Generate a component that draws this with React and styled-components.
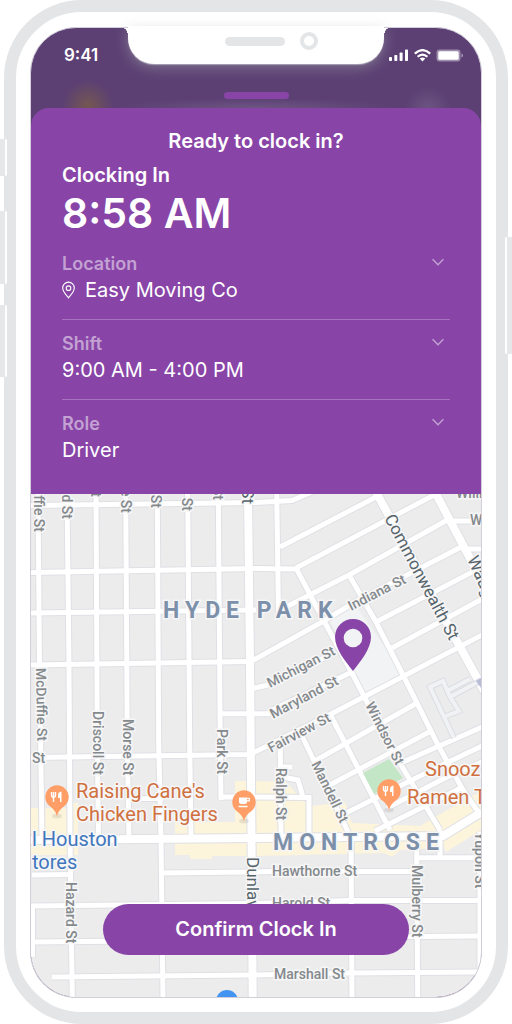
import React, { useState } from "react";
import styled, { createGlobalStyle } from "styled-components";

const colors = {
  purple: "#8845a7",
  backdrop: "#5c4074",
  frame: "#e4e5e7",
  faded: "#c3a2d3",
  divider: "#a673bf",
  white: "#ffffff",
  poi: "#d0703f",
  poiPin: "#ff9e67",
  street: "#84898c",
  avenue: "#56646b",
  district: "#7d90aa",
};

const GlobalStyle = createGlobalStyle`
  * {
    box-sizing: border-box;
  }
  body {
    margin: 0;
    background: ${colors.white};
    font-family: Inter, "Liberation Sans", sans-serif;
    color: ${colors.white};
  }
`;

const Stage = styled.div`
  padding: 0 4px;
  overflow: hidden;
`;

const Phone = styled.div`
  position: relative;
  border: 12px solid ${colors.frame};
  border-radius: 78px;
  padding: 15px 14px 14px;
  background: ${colors.white};
`;

const SideButton = styled.span`
  position: absolute;
  ${props => props.side}: -18px;
  top: ${props => props.top}px;
  width: 9px;
  height: ${props => props.length}px;
  background: #e6e7e8;
  border: 0 solid ${colors.white};
  border-${props => (props.side === "left" ? "right" : "left")}-width: 2px;
  border-radius: 2px;
`;

const Screen = styled.main`
  position: relative;
  border: 1px solid #d3cfd9;
  border-radius: 46px;
  background: ${colors.backdrop};
`;

const Header = styled.header`
  border-radius: 45px 45px 0 0;
  padding-bottom: 9px;
  background:
    radial-gradient(circle at 57px 78px, rgba(125, 96, 70, 0.75), transparent 26px),
    radial-gradient(ellipse 140px 10px at 50% 100%, rgba(160, 150, 175, 0.25), transparent),
    radial-gradient(circle at 397px 82px, rgba(160, 150, 175, 0.25), transparent 24px);
`;

const StatusBar = styled.div`
  display: grid;
  grid-template-columns: 1fr 256px 1fr;
  align-items: end;
  height: 37px;
`;

const Time = styled.span`
  padding-left: 33px;
  font-size: 17px;
  line-height: 20px;
  font-weight: 600;
`;

const Notch = styled.div`
  position: relative;
  align-self: start;
  display: flex;
  align-items: center;
  justify-content: center;
  gap: 15px;
  height: 38px;
  margin-top: -2px;
  padding: 0 0 8px 30px;
  border-radius: 0 0 26px 26px;
  background: ${colors.white};
  box-shadow: 0 1px 1px rgba(190, 190, 200, 0.7), 0 3px 14px rgba(180, 190, 180, 0.45);

  &::before,
  &::after {
    content: "";
    position: absolute;
    top: 2px;
    width: 5px;
    height: 8px;
  }
  &::before {
    left: -5px;
    background: radial-gradient(ellipse 5px 8px at 0 100%, transparent 95%, ${colors.white});
  }
  &::after {
    right: -5px;
    background: radial-gradient(ellipse 5px 8px at 100% 100%, transparent 95%, ${colors.white});
  }
`;

const Speaker = styled.span`
  width: 60px;
  height: 9px;
  border-radius: 5px;
  background: ${colors.frame};
`;

const Camera = styled.span`
  width: 18px;
  height: 18px;
  border: 4px solid ${colors.frame};
  border-radius: 50%;
`;

const StatusIcons = styled.div`
  display: flex;
  gap: 5px;
  padding: 0 0 3px 5px;
`;

const Handle = styled.div`
  width: 65px;
  height: 7px;
  margin: 27px auto 0;
  border-radius: 4px;
  background: ${colors.purple};
`;

const Sheet = styled.section`
  padding: 21px 31px 15px;
  border-radius: 18px 18px 0 0;
  background: ${colors.purple};
`;

const Title = styled.h1`
  margin: 0;
  font-size: 20px;
  line-height: 24px;
  font-weight: 600;
  text-align: center;
`;

const Subtitle = styled.h2`
  margin: 10px 0 0;
  font-size: 20px;
  line-height: 24px;
  font-weight: 600;
`;

const Clock = styled.div`
  margin: 2px 0 3px;
  font-size: 41px;
  line-height: 48px;
  font-weight: 600;
`;

const Field = styled.div`
  display: grid;
  grid-template-columns: 1fr auto;
  row-gap: 3px;
  padding: 13px 0 17px;
  border-bottom: 1px solid ${colors.divider};

  &:last-child {
    border-bottom: none;
  }
`;

const FieldLabel = styled.label`
  font-size: 18px;
  line-height: 22px;
  font-weight: 600;
  color: ${colors.faded};
`;

const FieldValue = styled.div`
  grid-column: 1 / -1;
  display: flex;
  align-items: center;
  gap: 10px;
`;

const FieldSelect = styled.select`
  appearance: none;
  flex: 1;
  min-width: 0;
  height: 24px;
  margin: 0;
  padding: 0;
  border: none;
  background: transparent;
  font-family: inherit;
  font-size: 20px;
  line-height: 24px;
  color: ${colors.white};
`;

const Chevron = styled.svg`
  width: 14px;
  height: 18px;
  margin-right: 5px;
  fill: none;
  stroke: ${colors.faded};
  stroke-width: 1.5;
`;

const MapArea = styled.section`
  position: relative;
  overflow: hidden;
  border-radius: 0 0 45px 45px;
`;

const MapDrawing = styled.svg`
  display: block;
  width: 100%;
  height: auto;
  background: #ececec;
  font-family: Roboto, "Liberation Sans", sans-serif;
`;

const StreetName = styled.text`
  font-size: ${props => (props.$major ? 17 : 14)}px;
  font-weight: ${props => (props.$major ? 400 : 500)};
  fill: ${props => (props.$major ? colors.avenue : colors.street)};
  stroke: #f6f6f7;
  stroke-width: 3px;
  paint-order: stroke;
`;

const DistrictName = styled(StreetName)`
  font-size: 23px;
  font-weight: 700;
  letter-spacing: 6px;
  fill: ${colors.district};
`;

const PlaceName = styled(StreetName)`
  font-size: 20px;
  font-weight: 400;
  fill: ${props => props.$color};
`;

const ConfirmButton = styled.button`
  position: absolute;
  left: 16%;
  right: 16%;
  bottom: 42px;
  padding: 13px 0 14px;
  border: none;
  border-radius: 26px;
  background: ${colors.purple};
  color: ${colors.white};
  font-family: inherit;
  font-size: 20px;
  line-height: 24px;
  font-weight: 600;
`;

const sideButtons = [
  { side: "left", top: 127, length: 37 },
  { side: "left", top: 199, length: 73 },
  { side: "left", top: 293, length: 72 },
  { side: "right", top: 225, length: 117 },
];

const fields = [
  { id: "location", label: "Location", value: "Easy Moving Co", icon: true },
  { id: "shift", label: "Shift", value: "9:00 AM - 4:00 PM" },
  { id: "role", label: "Role", value: "Driver" },
];

// thin residential streets
const streets = [
  // east - west
  "M31 505.5L256 502.5L292 500.5L312 492",
  "M31 572.5L256 568.5L296 569",
  "M31 613L256 610",
  "M31 665L250 661.5",
  "M222 713.7H270",
  "M250 689L268 685L330 655",
  "M31 757.5L250 754.5L331 714L402 677L482 635",
  "M141 798.5H163M220 797H250",
  "M32 875L72 874.5M162 873L250 872L272 871.5H416",
  "M31 906L250 903.5L350 900.5H481",
  "M31 942L250 940L350 937L481 936",
  "M52 977L250 975L350 973L481 972",
  "M416 857.7H482",
  "M252 797L309 797.5V838",
  // north - south
  "M38 494L39.5 665M39.5 665L42 838",
  "M67 494L69 665L70 838L72.3 998",
  "M96 494L97.3 745L98.5 838",
  "M125.7 494L127.3 745L129 838",
  "M157.3 494L158.7 745L161 838L163 998",
  "M187.7 494L189.7 745L191 838",
  "M218.3 494L220.3 745L221 800",
  "M32.5 906V957",
  "M276.7 494L278.5 612",
  "M280.3 748L281 838M281 767H292M282 777L298 780L303 797",
  "M351 838L352 998",
  "M416.7 850L417.7 998",
  "M440 830V857",
  "M480 832V972",
  // diagonals
  "M280 547L378 496",
  "M296 568L434 495",
  "M278 611L349 575L449 519",
  "M250 662L322 622L355 602L463 546",
  "M376 622L482 567",
  "M392 648L482 599",
  "M268 712L354 671",
  "M313 762L417 703",
  "M326 787L431 731",
  "M346 813L440 766L482 746",
  "M403 762L482 727",
  "M387 808L447 777L482 762",
  "M375 831L463 787",
  "M296 568L324 621L353 675L389 745L440 830",
  "M349 575L376 622L403 675L438 745L463 790L479 813",
  "M330 714L390 830",
  "M302 736L351 838",
  "M450 521H482M468 549H482",
];

const avenues = [
  "M248 494L250 665L251.5 838L252.7 998",
  "M31 840L256 838L443 836L482 812",
  "M376 492L459 645L488 698",
  "M435 492L484 585",
];

const campus = "M454 738L430 687L443 681L450 697L459 711L446 716M450 697L482 680M447 691L470 679";

// x, y is the start of the baseline, or its end for the names cut off at the top
const streetNames = [
  { text: "ffie St", x: 34, y: 532, angle: 90, end: true },
  { text: "d St", x: 62, y: 519, angle: 90, end: true },
  { text: "t", x: 91, y: 497, angle: 90, end: true },
  { text: "e St", x: 121, y: 513, angle: 90, end: true },
  { text: "St", x: 151, y: 508, angle: 90, end: true },
  { text: "St", x: 182, y: 511, angle: 90, end: true },
  { text: "St", x: 213, y: 500, angle: 90, end: true },
  { text: "St", x: 242, y: 504, angle: 90, end: true, major: true },
  { text: "McDuffie St", x: 36, y: 668, angle: 89 },
  { text: "Driscoll St", x: 93, y: 711, angle: 90 },
  { text: "Morse St", x: 123, y: 719, angle: 90 },
  { text: "Park St", x: 217, y: 729, angle: 90 },
  { text: "St", x: 32, y: 763, angle: 0 },
  { text: "Hazard St", x: 66, y: 882, angle: 90 },
  { text: "Dunlavy", x: 247, y: 857, angle: 90, major: true },
  { text: "Ralph St", x: 276, y: 768, angle: 90 },
  { text: "Mulberry St", x: 412, y: 865, angle: 90 },
  { text: "Yupon St", x: 475, y: 832, angle: 90 },
  { text: "Mandell St", x: 311, y: 764, angle: 64 },
  { text: "Windsor St", x: 365, y: 705, angle: 63 },
  { text: "Commonwealth St", x: 384, y: 518, angle: 62, major: true },
  { text: "Waugh", x: 467, y: 559, angle: 66, major: true },
  { text: "Indiana St", x: 351, y: 611, angle: -27 },
  { text: "Michigan St", x: 270, y: 688, angle: -27 },
  { text: "Maryland St", x: 273, y: 719, angle: -28 },
  { text: "Fairview St", x: 271, y: 753, angle: -28 },
  { text: "Hawthorne St", x: 272, y: 876, angle: 0 },
  { text: "Harold St", x: 272, y: 908, angle: 0 },
  { text: "Marshall St", x: 274, y: 979, angle: 0 },
  { text: "Willi", x: 456, y: 498, angle: 0 },
  { text: "W", x: 470, y: 525, angle: 0 },
];

const placeNames = [
  { text: "Raising Cane's", x: 76, y: 798, color: colors.poi },
  { text: "Chicken Fingers", x: 76, y: 821, color: colors.poi },
  { text: "Snooz", x: 425, y: 776, color: colors.poi },
  { text: "Ramen T", x: 407, y: 804, color: colors.poi },
  { text: "l Houston", x: 32, y: 846, color: "#3f76bd" },
  { text: "tores", x: 32, y: 869, color: "#3f76bd" },
];

const foodGlyph = (
  <>
    <path d="M-5.5 -5V-1.5Q-5.5 0 -3.5 0Q-1.5 0 -1.5 -1.5V-5M-3.5 -5V5" strokeWidth="1.4" fill="none" stroke="#fff" />
    <path d="M4.5 5H3V1H1V-2Q1 -5 4.5 -5.5Z" fill="#fff" />
  </>
);

const cafeGlyph = (
  <>
    <path d="M-5 -4.5H3V0Q3 2 1 2H-3Q-5 2 -5 0ZM-5.5 3.8H3.5V5.2H-5.5Z" fill="#fff" />
    <path d="M3 -3.7H5.3V-1.2H3" fill="none" stroke="#fff" strokeWidth="1.2" />
  </>
);

const PoiPin = ({ x, y, children }) => (
  <g transform={`translate(${x} ${y})`}>
    <ellipse cx="0" cy="19" rx="5" ry="2.5" fill="#000" opacity="0.08" />
    <path
      d="M0 20C-1 14 -4 12 -8 8.6A11.7 11.7 0 1 1 8 8.6C4 12 1 14 0 20Z"
      fill={colors.poiPin}
    />
    {children}
  </g>
);

const StreetMap = () => (
  <MapDrawing viewBox="31 494 450 503">
    <path
      d="M31 808H72V803H78V855H31ZM235 781H256V822H235ZM175 822H250V856H212V859H190V855H175ZM256 781L286 782L302 800L312 806L345 802L352 823L420 826L440 814L481 791V830L446 852L440 838L436 848L400 850L392 857L384 853L256 856Z"
      fill="#fcf4db"
    />
    <path d="M330 620L356 606L404 674L366 697Z" fill="#f1f3f5" />
    <g fill="none" stroke="#dfe0e5" strokeWidth="7">
      {streets.map(d => <path key={d} d={d} />)}
    </g>
    <g fill="none" stroke="#dfe0e5" strokeWidth="10">
      {avenues.map(d => <path key={d} d={d} />)}
    </g>
    <g fill="none" stroke="#ffffff" strokeWidth="5">
      {streets.map(d => <path key={d} d={d} />)}
    </g>
    <g fill="none" stroke="#ffffff" strokeWidth="8">
      {avenues.map(d => <path key={d} d={d} />)}
    </g>
    <path d={campus} fill="none" stroke="#dcdde4" strokeWidth="6" />
    <path d={campus} fill="none" stroke="#f1f2f4" strokeWidth="4" />
    <path d="M476 681L481 678V688Z" fill="#b9bcd6" />
    <path d="M363 773L389 759L403 778L374 794Z" fill="#c3e6c6" />

    {streetNames.map(({ text, x, y, angle, end, major }) => (
      <StreetName
        key={`${text}${x}${y}`}
        $major={major}
        textAnchor={end ? "end" : "start"}
        transform={`translate(${x} ${y}) rotate(${angle})`}
      >
        {text}
      </StreetName>
    ))}
    <DistrictName x="163" y="618">HYDE PARK</DistrictName>
    <DistrictName x="273" y="850">MONTROSE</DistrictName>
    {placeNames.map(({ text, x, y, color }) => (
      <PlaceName key={text} x={x} y={y} $color={color}>{text}</PlaceName>
    ))}

    <PoiPin x={57} y={797}>{foodGlyph}</PoiPin>
    <PoiPin x={244} y={802}>{cafeGlyph}</PoiPin>
    <PoiPin x={389} y={791}>{foodGlyph}</PoiPin>
    <circle cx="227" cy="1001" r="11" fill="#4394f0" />

    <path
      d="M353 671C346 662 335 649 335 637A18 18 0 0 1 371 637C371 649 360 662 353 671Z"
      fill={colors.purple}
    />
    <circle cx="353" cy="638" r="9.3" fill="#f1f3f5" />
  </MapDrawing>
);

const StatusGlyphs = () => (
  <StatusIcons>
    <svg width="20" height="13" viewBox="0 0 20 13" fill="#fff">
      <rect x="0" y="8" width="3" height="4" rx="0.8" />
      <rect x="5.3" y="6" width="3" height="6" rx="0.8" />
      <rect x="10.6" y="3.5" width="3" height="8.5" rx="0.8" />
      <rect x="16" y="0.5" width="3" height="11.5" rx="0.8" />
    </svg>
    <svg width="17" height="13" viewBox="0 0 17 13" fill="none" stroke="#fff" strokeWidth="2.2">
      <path d="M0.8 4.6Q8.5 -2.4 16.2 4.6" />
      <path d="M3.6 7.8Q8.5 3.4 13.4 7.8" />
      <path d="M8.5 12.4L5.7 9.6Q8.5 7.4 11.3 9.6Z" fill="#fff" stroke="none" />
    </svg>
    <svg width="27" height="13" viewBox="0 0 27 13" fill="#fff">
      <rect x="0.5" y="0.5" width="24" height="12" rx="3" opacity="0.4" />
      <rect x="2.3" y="2.3" width="20.4" height="8.4" rx="1.5" />
      <path d="M25.5 4.5Q27 5 27 6.5Q27 8 25.5 8.5Z" opacity="0.5" />
    </svg>
  </StatusIcons>
);

const LocationIcon = () => (
  <svg width="13" height="18" viewBox="0 0 13 18" fill="none" stroke="#fff" strokeWidth="1.1">
    <path d="M6.5 16.8C4.5 14.3 0.7 10.6 0.7 7A5.8 5.9 0 0 1 12.3 7C12.3 10.6 8.5 14.3 6.5 16.8Z" />
    <circle cx="6.5" cy="7.2" r="2.3" />
  </svg>
);

const App = () => {
  const [clockedIn, setClockedIn] = useState(false);

  return (
    <Stage>
      <GlobalStyle />
      <Phone>
        {sideButtons.map(button => (
          <SideButton key={button.side + button.top} {...button} />
        ))}
        <Screen>
          <Header>
            <StatusBar>
              <Time>9:41</Time>
              <Notch>
                <Speaker />
                <Camera />
              </Notch>
              <StatusGlyphs />
            </StatusBar>
            <Handle />
          </Header>
          <Sheet>
            <Title>Ready to clock in?</Title>
            <Subtitle>Clocking In</Subtitle>
            <Clock>8:58 AM</Clock>
            {fields.map(({ id, label, value, icon }) => (
              <Field key={id}>
                <FieldLabel htmlFor={id}>{label}</FieldLabel>
                <Chevron viewBox="0 0 14 20" aria-hidden="true">
                  <path d="M1 7L7 13L13 7" />
                </Chevron>
                <FieldValue>
                  {icon && <LocationIcon />}
                  <FieldSelect id={id} defaultValue={value}>
                    <option>{value}</option>
                  </FieldSelect>
                </FieldValue>
              </Field>
            ))}
          </Sheet>
          <MapArea>
            <StreetMap />
            <ConfirmButton type="button" aria-pressed={clockedIn} onClick={() => setClockedIn(true)}>
              Confirm Clock In
            </ConfirmButton>
          </MapArea>
        </Screen>
      </Phone>
    </Stage>
  );
};

export default App;
